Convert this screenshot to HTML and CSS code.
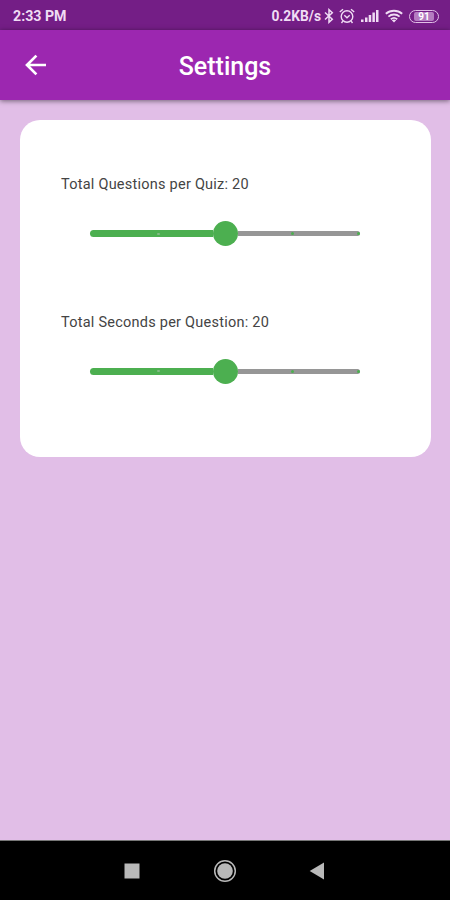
FILE: index.html
```html
<!DOCTYPE html>
<html lang="en">
<head>
<meta charset="utf-8">
<title>Settings</title>
<link rel="stylesheet" href="styles.css">
</head>
<body>
<div class="screen">
  <div class="status">
    <span class="time">2:33 PM</span>
    <span class="speed">0.2KB/s</span>
    <svg class="bt" width="10" height="16" viewBox="0 0 10 16" fill="none" stroke="currentColor" stroke-width="1.5"><path d="M1 4.5 8.3 11.2 5 14.3V1.7L8.3 4.8 1 11.5"/></svg>
    <svg class="alarm" width="16" height="16" viewBox="0 0 16 16" fill="none" stroke="currentColor" stroke-width="1.4"><circle cx="8" cy="8.5" r="5.8"/><path d="M.8 4 4 1.2M15.2 4 12 1.2M3.8 13.2 2.5 15M12.2 13.2l1.3 1.8M5.3 7.3 8 9.7l2.7-2.4"/></svg>
    <svg class="signal" width="18" height="14" viewBox="0 0 18 14" fill="currentColor"><path d="M0 10.5h2.5V13H0zM4 8.5h2.5V13H4zM7.7 6h2.5v7H7.7zM11.4 3.5h2.5V13h-2.5zM15 1h2.5v12H15z"/></svg>
    <svg class="wifi" width="18" height="14" viewBox="0 0 18 14" fill="none" stroke="currentColor" stroke-width="1.8"><path d="M.8 4.8c4.7-4.1 11.7-4.1 16.4 0M3.4 7.6c3.2-2.8 8-2.8 11.2 0M5.8 10.2c1.9-1.6 4.5-1.6 6.4 0"/><path d="M6.8 11.2c1.3-1 3.1-1 4.4 0L9 13.5z" fill="currentColor" stroke="none"/></svg>
    <span class="battery"><span class="level">91</span></span>
  </div>
  <header class="appbar">
    <svg class="back" width="22" height="22" viewBox="0 0 22 22" fill="none" stroke="#fff" stroke-width="2.7"><path d="M21 11H3M11.4 1.6 2 11l9.4 9.4"/></svg>
    <h1>Settings</h1>
  </header>
  <main>
    <section class="card">
      <div class="setting">
        <p class="label">Total Questions per Quiz: 20</p>
        <div class="slider"><i class="done"><b></b></i><i class="thumb"></i><i class="rest"><b></b><b></b></i></div>
      </div>
      <div class="setting">
        <p class="label">Total Seconds per Question: 20</p>
        <div class="slider"><i class="done"><b></b></i><i class="thumb"></i><i class="rest"><b></b><b></b></i></div>
      </div>
    </section>
  </main>
  <nav class="nav">
    <svg width="16" height="16" viewBox="0 0 16 16"><path d="M.5.5h15v15H.5z" fill="#b9b9b9"/></svg>
    <svg width="24" height="24" viewBox="0 0 24 24"><circle cx="12" cy="12" r="10.3" fill="none" stroke="#b9b9b9" stroke-width="1.5"/><circle cx="12" cy="12" r="7.8" fill="#b9b9b9"/></svg>
    <svg width="16" height="18" viewBox="0 0 16 18"><path d="M15 .5v17L.7 9z" fill="#b9b9b9"/></svg>
  </nav>
</div>
</body>
</html>
```
FILE: styles.css
```css
* { box-sizing: border-box; }
body { margin: 0; font-family: Roboto, sans-serif; }
.screen { width: 450px; height: 900px; display: flex; flex-direction: column; background: #e1bee7; overflow: hidden; }
.status { height: 30px; flex: none; display: flex; align-items: center; padding: 2px 11px 0 13px; background: #741e86; color: #f0dcf4; font-size: 14.2px; font-weight: 700; }
.status svg { flex: none; }
.time { margin-right: auto; }
.speed { font-size: 13.8px; }
.bt { margin-left: 3px; }
.alarm { margin-left: 5px; }
.signal { margin-left: 6px; }
.wifi { margin-left: 6px; }
.battery { width: 30px; height: 13px; margin-left: 6px; border: 1.5px solid #e0bfe6; border-radius: 7px; padding: 1px 4px; display: flex; }
.level { flex: 1; background: #b57cc1; color: #fff; font-size: 10px; line-height: 9px; text-align: center; border-radius: 2px; }
.appbar { height: 70px; flex: none; display: grid; grid-template-columns: 1fr auto 1fr; align-items: center; background: #9c27b0; box-shadow: 0 1px 5px rgba(0, 0, 0, .5); padding-top: 3px; z-index: 1; }
.back { margin-left: 25px; margin-bottom: 3px; }
h1 { margin: 1px 0 0; color: #fff; font-size: 25px; line-height: 30px; font-weight: 500; }
main { flex: 1; padding: 20px 19px 0 20px; }
.card { height: 337px; background: #fff; border-radius: 20px; padding: 55px 40px 0 41px; }
.setting { height: 137.5px; }
.label { margin: 0; font-size: 14.5px; line-height: 20px; letter-spacing: .24px; color: #444; white-space: nowrap; }
.slider { height: 26px; width: 270px; margin: 25.5px 0 0 29px; display: flex; align-items: center; }
.done { width: 123px; height: 7px; border-radius: 4px 0 0 4px; background: #4caf50; display: flex; align-items: center; padding-left: 67px; }
.done b { width: 3px; height: 2px; background: #83b986; border-radius: 1px; }
.thumb { width: 25px; height: 25px; border-radius: 50%; background: #4caf50; }
.rest { flex: 1; height: 5px; border-radius: 0 3px 3px 0; background: #969696; display: flex; align-items: center; justify-content: space-between; padding-left: 53px; }
.rest b { width: 3px; height: 3px; border-radius: 50%; background: #4caf50; }
.nav { height: 60px; flex: none; background: #000; border-top: 1px solid #777; display: flex; align-items: center; justify-content: space-between; padding: 1px 125px 0 124px; }
```
